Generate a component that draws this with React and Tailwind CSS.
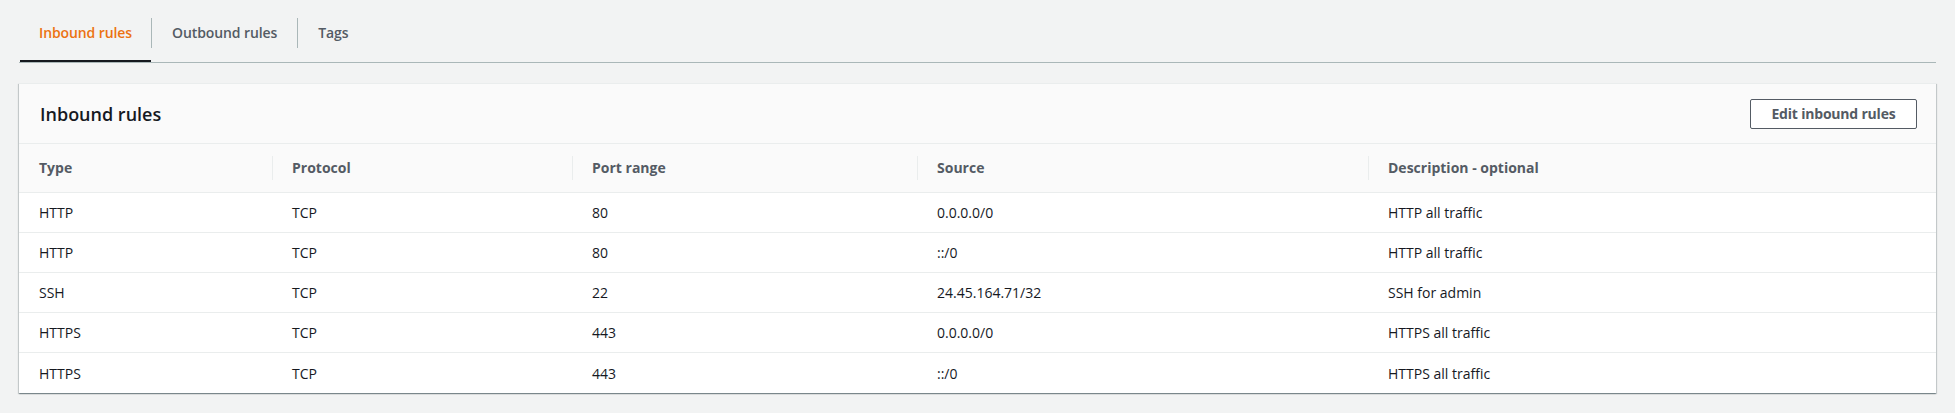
import React from "react";

const rows = [
  ["HTTP", "TCP", "80", "0.0.0.0/0", "HTTP all traffic"],
  ["HTTP", "TCP", "80", "::/0", "HTTP all traffic"],
  ["SSH", "TCP", "22", "24.45.164.71/32", "SSH for admin"],
  ["HTTPS", "TCP", "443", "0.0.0.0/0", "HTTPS all traffic"],
  ["HTTPS", "TCP", "443", "::/0", "HTTPS all traffic"],
];

const headers = ["Type", "Protocol", "Port range", "Source", "Description - optional"];
const gridCols = "grid grid-cols-[253px_300px_345px_451px_1fr]";

export default function App() {
  return (
    <div
      className="min-h-[413px] bg-[#f2f3f3] px-[19px] pt-3 text-[14px] text-[#16191f]"
      style={{ fontFamily: '"Open Sans", "Liberation Sans", sans-serif' }}
    >
      {/* Tabs */}
      <div className="flex border-b border-[#aab7b8] pl-px">
        <div className="px-[19px] pt-[11px] pb-[17px] border-b-2 border-[#16191f] font-semibold leading-5 tracking-[-0.1px] text-[#ec7211]">
          Inbound rules
        </div>
        <div className="w-px h-[30px] bg-[#aab7b8] mt-[6px]" />
        <div className="px-5 pt-[11px] pb-[17px] border-b-2 border-transparent font-semibold leading-5 tracking-[-0.1px] text-[#545b64]">
          Outbound rules
        </div>
        <div className="w-px h-[30px] bg-[#aab7b8] mt-[6px]" />
        <div className="px-5 pt-[11px] pb-[17px] border-b-2 border-transparent font-semibold leading-5 tracking-[-0.1px] text-[#545b64]">
          Tags
        </div>
      </div>

      {/* Panel */}
      <div className="mt-5 bg-white border-t border-[#eaeded] shadow-[0_1px_1px_0_rgba(0,28,36,0.3),1px_1px_1px_0_rgba(0,28,36,0.15),-1px_1px_1px_0_rgba(0,28,36,0.15)]">
        <div className="h-[60px] flex items-center justify-between bg-[#fafafa] border-b border-[#eaeded] pl-[21px] pr-[19px]">
          <h2 className="text-[18px] font-semibold leading-6 text-[#16191f]">Inbound rules</h2>
          <button className="h-[30px] w-[167px] border border-[#545b64] rounded-[2px] bg-white font-bold text-[14px] leading-5 tracking-[-0.2px] text-[#545b64]">
            Edit inbound rules
          </button>
        </div>

        <div className={`${gridCols} h-[49px] items-center bg-[#fafafa] border-b border-[#eaeded]`}>
          {headers.map((h, i) => (
            <div key={h} className="flex items-center">
              {i === 0 ? (
                <span className="pl-5 font-bold text-[#545b64] leading-5">{h}</span>
              ) : (
                <span className="h-6 flex items-center border-l border-[#eaeded] pl-[19px] font-bold text-[#545b64] leading-5">
                  {h}
                </span>
              )}
            </div>
          ))}
        </div>

        {rows.map((r, ri) => (
          <div
            key={ri}
            className={`${gridCols} h-10 items-center ${ri < rows.length - 1 ? "border-b border-[#eaeded]" : ""}`}
          >
            {r.map((c, ci) => (
              <div key={ci} className="pl-5 pt-px leading-5">
                {c}
              </div>
            ))}
          </div>
        ))}
      </div>
    </div>
  );
}
